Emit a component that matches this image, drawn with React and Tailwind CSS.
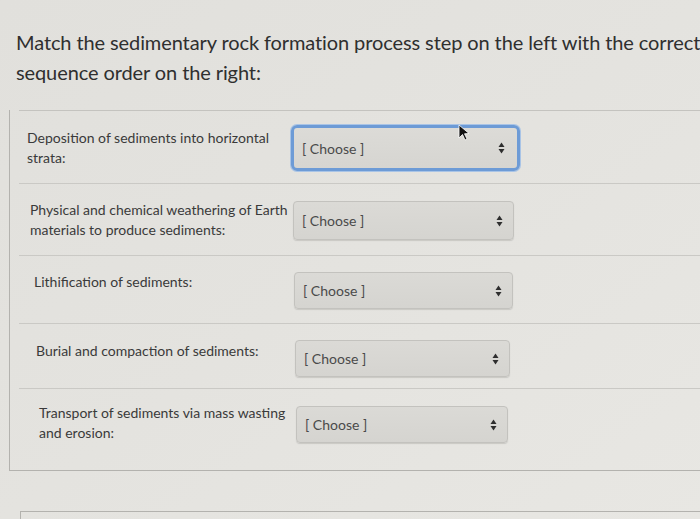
import React from "react";

function Arrows() {
  return (
    <svg width="7" height="12" viewBox="0 0 7 12" className="shrink-0">
      <path d="M3.5 0.5 L6.5 5 L0.5 5 Z" fill="#2e2e2e" />
      <path d="M3.5 11.5 L6.5 7 L0.5 7 Z" fill="#2e2e2e" />
    </svg>
  );
}

function Select({ focused, w, h }) {
  return (
    <div
      className={
        focused
          ? "flex items-center justify-between rounded-[6px] border-[3px] border-[#6d9bd6] bg-gradient-to-b from-[#dcdbd7] to-[#d6d5d1] pl-[8px] pr-[12px] shadow-[0_0_0_1px_#a9c4e6]"
          : "flex items-center justify-between rounded-[4px] border border-[#c3c2be] bg-gradient-to-b from-[#dbdad6] to-[#d5d4d0] pl-[8px] pr-[10px] shadow-[0_1px_1px_#c9c8c4]"
      }
      style={{ width: w, height: h }}
    >
      <span className="text-[14px] text-[#4a4a4a]">[ Choose ]</span>
      <Arrows />
    </div>
  );
}

const rows = [
  { lines: ["Deposition of sediments into horizontal", "strata:"], h: 73, pl: 8, pt: 17, selTop: 14, selLeft: 272, w: 229, hh: 46, focused: true },
  { lines: ["Physical and chemical weathering of Earth", "materials to produce sediments:"], h: 72, pl: 11, pt: 16, selTop: 17, selLeft: 274, w: 221, hh: 39 },
  { lines: ["Lithification of sediments:"], h: 68, pl: 15, pt: 16, selTop: 16, selLeft: 275, w: 219, hh: 37 },
  { lines: ["Burial and compaction of sediments:"], h: 65, pl: 17, pt: 17, selTop: 16, selLeft: 276, w: 215, hh: 37 },
  { lines: ["Transport of sediments via mass wasting", "and erosion:"], h: 81, pl: 20, pt: 14, selTop: 17, selLeft: 277, w: 212, hh: 37 },
];

export default function App() {
  return (
    <div className="relative h-[519px] w-[700px] overflow-hidden bg-gradient-to-br from-[#e1e0dc] via-[#e4e3df] to-[#e8e7e3] font-['Lato','Noto_Sans',sans-serif] text-[#333]">
      <div className="whitespace-nowrap pl-[16px] pt-[27px] text-[20px] leading-[30px] tracking-[-0.1px] text-[#2f2f2f]">
        Match the sedimentary rock formation process step on the left with the correct
        <br />
        sequence order on the right:
      </div>

      <div className="ml-[9px] mt-[23px] h-[361px] border-b border-l border-[#b3b2ae]">
        <div className="ml-[9px]">
          {rows.map((r, i) => (
            <div
              key={i}
              className={(i === 0 ? "border-[#c4c3bf] " : "border-[#cac9c5] ") + "flex border-t"}
              style={{ height: r.h }}
            >
              <div
                className="shrink-0 whitespace-nowrap text-[14px] leading-[20px] text-[#3a3a3a]"
                style={{ paddingLeft: r.pl, paddingTop: r.pt, width: r.selLeft }}
              >
                {r.lines.map((l, j) => (
                  <div key={j}>{l}</div>
                ))}
              </div>
              <div style={{ paddingTop: r.selTop }}>
                <Select focused={r.focused} w={r.w} h={r.hh} />
              </div>
            </div>
          ))}
        </div>
      </div>

      <div className="ml-[20px] mt-[40px] h-[20px] border-l border-t border-[#b3b2ae]" />

      <svg
        className="absolute left-[458px] top-[124px]"
        width="14"
        height="18"
        viewBox="0 0 14 18"
      >
        <path d="M1 1 L1 14 L4.5 10.5 L7 16 L9 15 L6.5 9.8 L11 9.5 Z" fill="#111" stroke="#fff" strokeWidth="0.8" />
      </svg>
    </div>
  );
}
